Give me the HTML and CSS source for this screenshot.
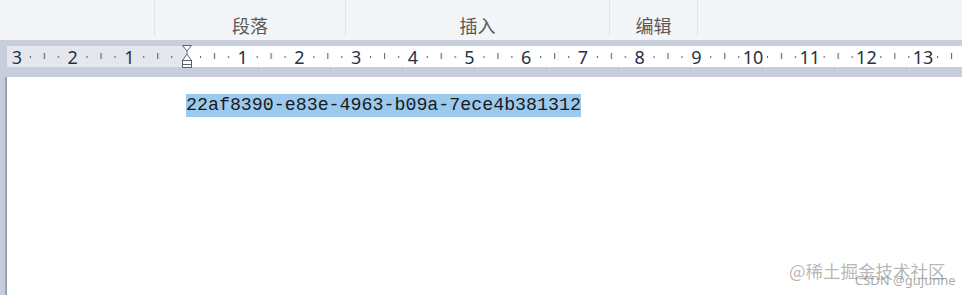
FILE: index.html
```html
<!DOCTYPE html>
<html lang="zh">
<head>
<meta charset="utf-8">
<link rel="stylesheet" href="styles.css">
</head>
<body>
<div class="toolbar">
  <div class="tb-lead"></div>
  <div class="tb-group g1"><span>段落</span></div>
  <div class="tb-group g2"><span>插入</span></div>
  <div class="tb-group g3"><span>编辑</span></div>
  <div class="tb-group g4"></div>
</div>
<div class="ruler-band">
  <svg class="ruler" width="962" height="37" viewBox="0 0 962 37">
    <defs>
      <pattern id="ticks" patternUnits="userSpaceOnUse" x="186" y="0" width="56.7" height="37">
        <rect x="14" y="16" width="1" height="2" fill="#4a5468"/>
        <rect x="28" y="13" width="1" height="6" fill="#4a5468"/>
        <rect x="42" y="16" width="1" height="2" fill="#4a5468"/>
      </pattern>
    </defs>
    <rect x="7" y="6" width="179" height="21" fill="#e4e7ee"/>
    <rect x="186" y="6" width="776" height="21" fill="#ffffff"/>
    <rect x="7" y="6" width="955" height="21" fill="url(#ticks)"/>
    <g class="tabs" fill="#a9b0bf">
      <rect x="258" y="28" width="1" height="2"/>
      <rect x="330" y="28" width="1" height="2"/>
      <rect x="402" y="28" width="1" height="2"/>
      <rect x="474" y="28" width="1" height="2"/>
      <rect x="546" y="28" width="1" height="2"/>
      <rect x="618" y="28" width="1" height="2"/>
      <rect x="690" y="28" width="1" height="2"/>
      <rect x="762" y="28" width="1" height="2"/>
      <rect x="834" y="28" width="1" height="2"/>
      <rect x="906" y="28" width="1" height="2"/>
    </g>
    <g class="nums">
      <text x="16.9">3</text>
      <text x="72.6">2</text>
      <text x="129.3">1</text>
      <text x="242.7">1</text>
      <text x="299.4">2</text>
      <text x="356.1">3</text>
      <text x="412.8">4</text>
      <text x="469.5">5</text>
      <text x="526.2">6</text>
      <text x="582.9">7</text>
      <text x="639.6">8</text>
      <text x="696.3">9</text>
      <text x="753">10</text>
      <text x="809.7">11</text>
      <text x="866.4">12</text>
      <text x="923.1">13</text>
    </g>
    <g class="marker" fill="#ffffff" stroke="#5a6272" stroke-width="1">
      <path d="M182.5 5.5 H191.5 L187 11 Z"/>
      <path d="M187 11 V14"/>
      <path d="M187 14 L182.5 20.5 H191.5 Z"/>
      <rect x="182.5" y="20.5" width="9" height="7"/>
      <path d="M182.5 24.5 H191.5"/>
    </g>
  </svg>
</div>
<div class="doc">
  <div class="doc-edge"></div>
  <div class="page">
    <p class="line"><span class="sel">22af8390-e83e-4963-b09a-7ece4b381312</span></p>
  </div>
</div>
<div class="wm wm-juejin">@稀土掘金技术社区</div>
<div class="wm wm-csdn">CSDN @gujunhe</div>
</body>
</html>
```

FILE: styles.css
```css
* { box-sizing: border-box; }
html, body {
  margin: 0;
  padding: 0;
  width: 962px;
  height: 295px;
  overflow: hidden;
  background: #ffffff;
  font-family: "Noto Sans", "Noto Sans CJK SC", sans-serif;
}
.toolbar {
  display: flex;
  height: 40px;
  background: #f4f5f7;
}
.tb-lead { width: 154px; }
.tb-group {
  display: flex;
  justify-content: center;
  align-items: flex-start;
  border-left: 1px solid #e2e4e8;
  height: 36px;
  padding-top: 13px;
  font-family: "Noto Sans CJK SC", sans-serif;
  font-size: 18px;
  line-height: 24px;
  color: #5a5a5a;
}
.g1 { width: 191px; }
.g2 { width: 264px; }
.g3 { width: 88px; }
.g4 { flex: 1; }
.ruler-band {
  height: 37px;
  background: #c8cedc;
}
.ruler { display: block; }
.nums text {
  font-family: "Noto Sans", sans-serif;
  font-size: 18px;
  fill: #263247;
  text-anchor: middle;
  transform: translateY(23.5px);
}
.doc {
  display: flex;
  height: 218px;
}
.doc-edge {
  width: 7px;
  background: linear-gradient(to right, #c8cedb 0, #c2c9d7 5px, #8e97a9 6px, #8e97a9 7px);
}
.page {
  flex: 1;
  background: #ffffff;
  padding: 17px 0 0 179px;
}
.line {
  margin: 0;
  font-family: "Liberation Mono", "DejaVu Sans Mono", monospace;
  font-size: 18.3px;
  line-height: 23px;
  color: #1a1a1a;
}
.sel {
  background: #9ccaef;
  display: inline-block;
  height: 23px;
}
.wm {
  position: absolute;
  white-space: nowrap;
}
.wm-juejin {
  left: 789px;
  top: 259px;
  font-family: "Noto Sans CJK SC", sans-serif;
  font-size: 17.5px;
  line-height: 24px;
  color: rgba(120, 120, 120, 0.55);
}
.wm-csdn {
  left: 855px;
  top: 271px;
  font-family: "Noto Sans", sans-serif;
  font-size: 13px;
  line-height: 18px;
  color: rgba(110, 110, 110, 0.6);
}
```
